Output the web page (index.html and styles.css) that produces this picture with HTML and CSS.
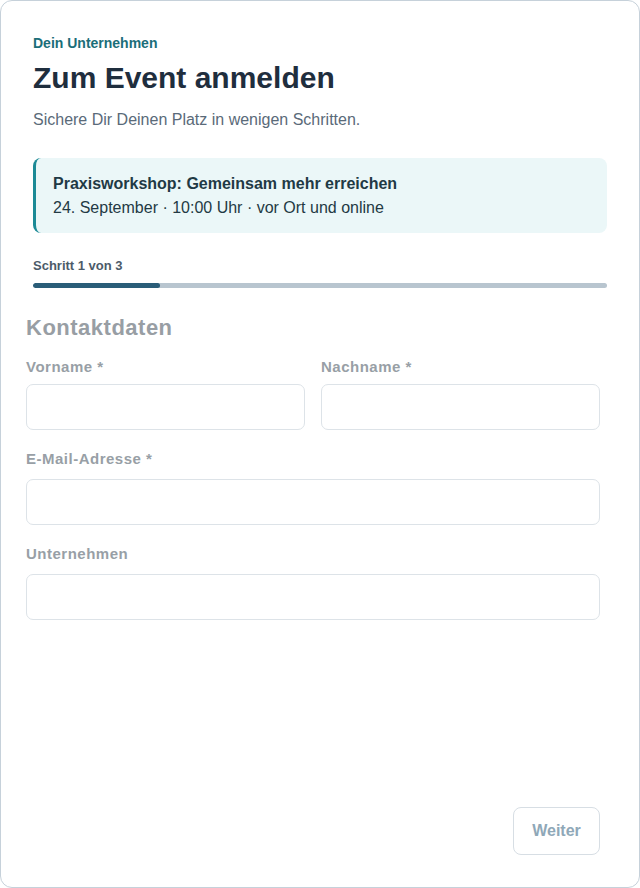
FILE: index.html
```html
<!DOCTYPE html>
<html lang="de">
<head>
<meta charset="utf-8">
<title>Zum Event anmelden</title>
<link rel="stylesheet" href="styles.css">
</head>
<body>
<main class="card">
  <header class="head">
    <p class="brand">Dein Unternehmen</p>
    <h1 class="title">Zum Event anmelden</h1>
    <p class="lead">Sichere Dir Deinen Platz in wenigen Schritten.</p>
    <div class="event">
      <p class="event-name">Praxisworkshop: Gemeinsam mehr erreichen</p>
      <p class="event-meta">24. September · 10:00 Uhr · vor Ort und online</p>
    </div>
    <p class="step">Schritt 1 von 3</p>
    <div class="progress"><div class="progress-fill" style="width:22.1%"></div></div>
  </header>
  <form class="form">
    <h2 class="section">Kontaktdaten</h2>
    <div class="row">
      <label class="field">
        <span class="label">Vorname *</span>
        <input class="input" type="text">
      </label>
      <label class="field">
        <span class="label">Nachname *</span>
        <input class="input" type="text">
      </label>
    </div>
    <label class="field">
      <span class="label">E-Mail-Adresse *</span>
      <input class="input" type="email">
    </label>
    <label class="field">
      <span class="label">Unternehmen</span>
      <input class="input" type="text">
    </label>
  </form>
  <footer class="foot">
    <button class="btn" type="button">Weiter</button>
  </footer>
</main>
</body>
</html>
```
FILE: styles.css
```css
* { box-sizing: border-box; }
html, body { margin: 0; padding: 0; background: #ffffff; }
body {
  font-family: "Liberation Sans", Arial, sans-serif;
  width: 640px;
  height: 888px;
}
.card {
  width: 640px;
  height: 888px;
  border: 1px solid #c6d1da;
  border-radius: 12px;
  background: #fff;
  display: flex;
  flex-direction: column;
}
.head {
  padding: 34px 32px 0 32px;
}
.brand {
  margin: 0;
  font-size: 14px;
  line-height: 17px;
  font-weight: 700;
  color: #1b6e79;
}
.title {
  margin: 8px 0 0 0;
  font-size: 30px;
  line-height: 36px;
  font-weight: 700;
  color: #1f2e3e;
}
.lead {
  margin: 13px 0 0 0;
  font-size: 16px;
  line-height: 22px;
  color: #5a6a79;
}
.event {
  margin-top: 27px;
  background: #ebf7f8;
  border-left: 3px solid #1c8a96;
  border-radius: 8px;
  padding: 14px 20px 13px 17px;
}
.event-name {
  margin: 0;
  font-size: 16px;
  line-height: 24px;
  font-weight: 700;
  color: #1f3a45;
}
.event-meta {
  margin: 0;
  font-size: 16px;
  line-height: 24px;
  color: #233a44;
}
.step {
  margin: 25px 0 0 0;
  font-size: 13px;
  line-height: 16px;
  font-weight: 700;
  color: #4c5b69;
}
.progress {
  margin-top: 9px;
  height: 5px;
  border-radius: 3px;
  background: #b8c5cf;
  overflow: hidden;
}
.progress-fill {
  height: 100%;
  background: #2a5d78;
  border-radius: 3px;
}
.form {
  padding: 27px 39px 0 25px;
}
.section {
  margin: 0 0 17px 0;
  font-size: 22px;
  line-height: 26px;
  font-weight: 700;
  letter-spacing: 0.5px;
  color: #989ea4;
}
.row {
  display: grid;
  grid-template-columns: 1fr 1fr;
  column-gap: 16px;
}
.field {
  display: flex;
  flex-direction: column;
  margin-bottom: 20px;
}
.label {
  font-size: 15px;
  line-height: 18px;
  font-weight: 700;
  letter-spacing: 0.5px;
  color: #989fa6;
  margin-bottom: 11px;
}
.row .label {
  margin-bottom: 8px;
}
.input {
  height: 46px;
  border: 1px solid #dde3e8;
  border-radius: 7px;
  background: #fff;
  font: inherit;
  padding: 0 12px;
  width: 100%;
}
.foot {
  margin-top: auto;
  display: flex;
  justify-content: flex-end;
  padding: 0 39px 32px 0;
}
.btn {
  width: 87px;
  height: 48px;
  border: 1px solid #d7dee4;
  border-radius: 8px;
  background: #fff;
  font-family: inherit;
  font-size: 16px;
  font-weight: 700;
  color: #8fa8b8;
}
```
